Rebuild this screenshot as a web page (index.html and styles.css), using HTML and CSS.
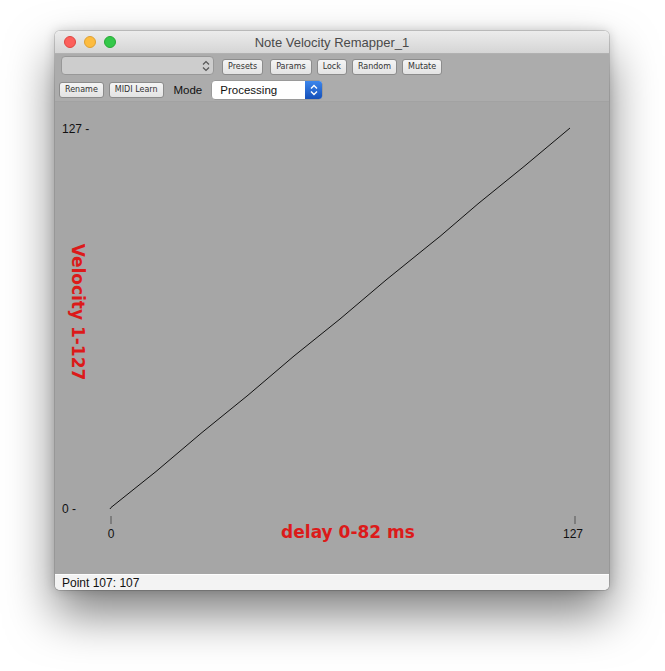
FILE: index.html
```html
<!DOCTYPE html>
<html lang="en">
<head>
    <meta charset="UTF-8">
    <meta name="viewport" content="width=device-width, initial-scale=1.0">
    <title>Note Velocity Remapper_1</title>
    <link rel="stylesheet" href="styles.css">
</head>
<body>
    <div class="window">
        <header class="titlebar">
            <div class="lights">
                <span class="light red"></span>
                <span class="light yellow"></span>
                <span class="light green"></span>
            </div>
            <div class="title">Note Velocity Remapper_1</div>
            <div></div>
        </header>

        <div class="toolbar">
            <div class="tool-row row-top">
                <div class="preset-select">
                    <svg width="8" height="12" viewBox="0 0 8 12">
                        <path d="M1 4.5 L4 1.5 L7 4.5 M1 7.5 L4 10.5 L7 7.5" fill="none" stroke="#555" stroke-width="1.2"/>
                    </svg>
                </div>
                <button class="btn btn-presets">Presets</button>
                <button class="btn">Params</button>
                <button class="btn">Lock</button>
                <button class="btn">Random</button>
                <button class="btn">Mutate</button>
            </div>
            <div class="tool-row row-bottom">
                <button class="btn">Rename</button>
                <button class="btn">MIDI Learn</button>
                <span class="mode-label">Mode</span>
                <div class="mode-select">
                    <span class="mode-value">Processing</span>
                    <span class="mode-arrows">
                        <svg width="8" height="12" viewBox="0 0 8 12">
                            <path d="M1 4.5 L4 1.5 L7 4.5 M1 7.5 L4 10.5 L7 7.5" fill="none" stroke="#fff" stroke-width="1.4"/>
                        </svg>
                    </span>
                </div>
            </div>
        </div>

        <!-- velocity curve -->
        <div class="plot">
            <svg class="graph" width="554" height="472" viewBox="0 0 554 472">
                <text class="axis-num" x="7" y="31">127 -</text>
                <text class="axis-num" x="7" y="411">0 -</text>

                <line class="tick" x1="56" y1="414" x2="56" y2="422"/>
                <text class="axis-num" x="56" y="436" text-anchor="middle">0</text>
                <line class="tick" x1="520" y1="414" x2="520" y2="422"/>
                <text class="axis-num" x="518" y="436" text-anchor="middle">127</text>

                <polyline class="curve" points="55,407 56,405.5 101,369.5 147,330.5 193,293.2 239,254 285,217 331,178 377,140.8 385,134.4 423,101.8 469,64.5 515,26"/>

                <text class="axis-title" x="293" y="436" text-anchor="middle">delay 0-82 ms</text>
                <text class="axis-title" text-anchor="middle" transform="translate(17 210) rotate(90)">Velocity 1-127</text>
            </svg>
        </div>

        <footer class="status">Point 107: 107</footer>
    </div>
</body>
</html>
```

FILE: styles.css
```css
body {
    margin: 0;
    padding-top: 31px;
    min-height: 671px;
    box-sizing: border-box;
    background-color: #ffffff;
    font-family: "Liberation Sans", Arial, sans-serif;
}
.window {
    width: 554px;
    height: 559px;
    margin-left: 55px;
    display: flex;
    flex-direction: column;
    border-radius: 5px;
    overflow: hidden;
    box-shadow: 0 0 0 1px rgba(0, 0, 0, 0.14), 0 0 12px rgba(0, 0, 0, 0.18), 0 24px 48px rgba(0, 0, 0, 0.5);
}
.titlebar {
    height: 22px;
    flex-shrink: 0;
    display: grid;
    grid-template-columns: 1fr auto 1fr;
    align-items: center;
    background: linear-gradient(#ececec, #d5d5d5);
    border-bottom: 1px solid #b1b1b1;
}
.lights {
    display: flex;
    gap: 8px;
    padding-left: 9px;
}
.light {
    width: 12px;
    height: 12px;
    border-radius: 50%;
    box-sizing: border-box;
}
.red {
    background-color: #fc605c;
    border: 1px solid #de4640;
}
.yellow {
    background-color: #fdbc40;
    border: 1px solid #dea032;
}
.green {
    background-color: #34c84a;
    border: 1px solid #27a935;
}
.title {
    font-size: 13px;
    color: #4a4a4a;
}
.toolbar {
    flex-shrink: 0;
    background-color: #acacac;
}
.tool-row {
    display: flex;
    align-items: flex-start;
    gap: 5px;
}
.row-top {
    height: 24px;
    padding: 2px 0 0 6px;
    box-sizing: border-box;
}
.row-bottom {
    height: 23px;
    padding: 2px 0 0 4px;
    box-sizing: border-box;
}
.preset-select {
    width: 153px;
    height: 19px;
    box-sizing: border-box;
    margin-right: 3px;
    border: 1px solid #989898;
    border-radius: 4px;
    background-color: #cdcdcd;
    display: flex;
    justify-content: flex-end;
    align-items: center;
    padding-right: 3px;
}
.btn {
    height: 16px;
    padding: 0 5px;
    margin: 3px 0 0;
    border: 1px solid #8c8c8c;
    border-radius: 3px;
    background: linear-gradient(#f4f4f4, #e3e3e3);
    font-family: "DejaVu Sans", sans-serif;
    font-size: 8px;
    line-height: 14px;
    color: #333;
    cursor: pointer;
}
.row-bottom .btn {
    margin-top: 2px;
}
.btn-presets {
    margin-right: 2px;
}
.mode-label {
    margin: 0 4px 0 5px;
    font-size: 11.5px;
    line-height: 20px;
    color: #111;
}
.mode-select {
    width: 112px;
    height: 20px;
    box-sizing: border-box;
    display: flex;
    border: 1px solid #9a9a9a;
    border-radius: 4px;
    background-color: #fff;
    overflow: hidden;
}
.mode-value {
    flex: 1;
    padding-left: 8px;
    font-size: 11.5px;
    line-height: 18px;
    color: #111;
}
.mode-arrows {
    width: 17px;
    display: flex;
    justify-content: center;
    align-items: center;
    background: linear-gradient(#3c86ec, #1550b9);
}
.plot {
    flex: 1;
    background-color: #a6a6a6;
    border-top: 1px solid #a2a2a2;
}
.graph {
    display: block;
}
.axis-num {
    font-family: "Liberation Sans", Arial, sans-serif;
    font-size: 12px;
    fill: #111;
}
.axis-title {
    font-family: "DejaVu Sans", sans-serif;
    font-weight: bold;
    font-size: 17px;
    fill: #dc1a1a;
}
.tick {
    stroke: #555;
    stroke-width: 1;
}
.curve {
    fill: none;
    stroke: #111;
    stroke-width: 1;
}
.status {
    height: 17px;
    flex-shrink: 0;
    padding-left: 7px;
    background-color: #f3f3f3;
    border-top: 1px solid #fdfdfd;
    font-size: 12px;
    line-height: 17px;
    color: #111;
}
```
